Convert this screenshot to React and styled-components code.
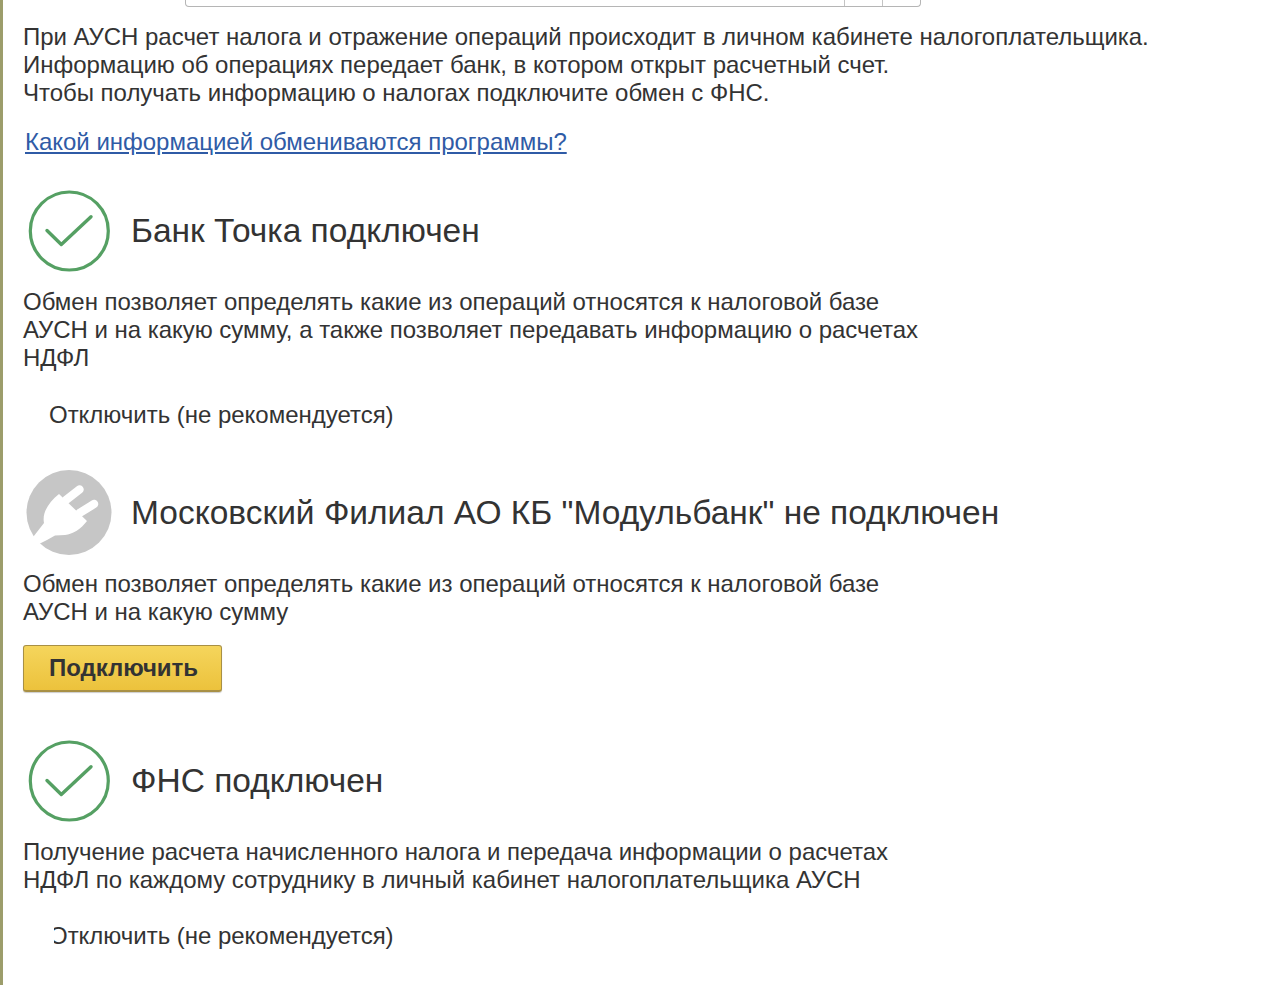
import React from "react";
import styled, { createGlobalStyle } from "styled-components";

const GlobalStyle = createGlobalStyle`
  html, body {
    margin: 0;
    padding: 0;
    background: #fff;
  }
  body {
    font-family: "Liberation Sans", Arial, sans-serif;
    color: #333;
  }
`;

const Page = styled.div`
  width: 1280px;
  height: 985px;
  box-sizing: border-box;
  border-left: 3px solid #9c9d6b;
  padding-left: 20px;
  overflow: hidden;
  display: flex;
  flex-direction: column;
`;

const SearchField = styled.div`
  display: flex;
  justify-content: flex-end;
  box-sizing: border-box;
  width: 736px;
  height: 7px;
  margin-left: 162px;
  border: 1px solid #b5b5b5;
  border-top: 0;
  border-radius: 0 0 4px 4px;
`;

const FieldButton = styled.div`
  width: 37px;
  border-left: 1px solid #c4c4c4;
`;

const Text = styled.p`
  margin: ${({ $top }) => $top || 0}px 0 0;
  font-size: 24px;
  line-height: 28px;
  letter-spacing: -0.02px;
  white-space: pre-line;
`;

const HelpLink = styled.a`
  display: block;
  margin: 21px 0 0 2px;
  font-size: 24px;
  line-height: 28px;
  letter-spacing: -0.02px;
  color: #2f5ba6;
  text-decoration: underline;
`;

const StatusRow = styled.div`
  display: flex;
  align-items: center;
  gap: 18px;
  margin-top: ${({ $top }) => $top}px;
  height: 88px;
`;

const StatusIcon = styled.svg`
  display: block;
  flex: none;
  width: 88px;
  height: 88px;
  margin-left: 2px;
`;

const StatusTitle = styled.h2`
  margin: 0;
  font-size: 33.5px;
  line-height: 40px;
  font-weight: 400;
  color: #333;
`;

const TextAction = styled.div`
  margin: ${({ $top }) => $top}px 0 0 26px;
  font-size: 24px;
  line-height: 28px;
  letter-spacing: -0.02px;
`;

// the first letter is cut by the left edge of the action, as in the product
const ClippedAction = styled(TextAction)`
  margin-left: 31px;
  overflow: hidden;
  white-space: nowrap;
  text-indent: -5px;
`;

const ConnectButton = styled.button`
  display: block;
  box-sizing: border-box;
  width: 199px;
  height: 47px;
  margin: 19px 0 0;
  padding: 0 0 0 2px;
  border: 1px solid #a89045;
  border-bottom-width: 2px;
  border-radius: 3px;
  background: linear-gradient(#f5d55c, #ecc23c);
  box-shadow: 0 1px 1px rgba(0, 0, 0, 0.2);
  font-family: inherit;
  font-size: 24px;
  font-weight: 700;
  color: #333;
`;

const CheckIcon = () => (
  <StatusIcon viewBox="0 0 88 88">
    <circle cx="44.3" cy="44" r="39" fill="none" stroke="#55a063" strokeWidth="3.2" />
    <path
      d="M22 43.5 L36.3 57.5 L66 29.7"
      fill="none"
      stroke="#55a063"
      strokeWidth="3.4"
      strokeLinecap="round"
      strokeLinejoin="round"
    />
  </StatusIcon>
);

const PlugIcon = () => (
  <StatusIcon viewBox="0 0 88 88">
    <circle cx="44" cy="43.5" r="42.5" fill="#c6c6c6" />
    <path
      d="M34 25 L62 52 C56 60 48 65 40 66 L30 66.5 L22 71 L8 78 L5 72 L19 54 C17 44 23 34 34 25 Z"
      fill="#fff"
    />
    <path
      d="M41 31 L54.5 20.5 M54.5 44 L69 35"
      stroke="#fff"
      strokeWidth="8.5"
      strokeLinecap="round"
    />
  </StatusIcon>
);

const App = () => (
  <Page>
    <GlobalStyle />
    <SearchField>
      <FieldButton />
      <FieldButton />
    </SearchField>
    <Text $top={16}>
      {"При АУСН расчет налога и отражение операций происходит в личном кабинете налогоплательщика.\nИнформацию об операциях передает банк, в котором открыт расчетный счет.\nЧтобы получать информацию о налогах подключите обмен с ФНС."}
    </Text>
    <HelpLink>Какой информацией обмениваются программы?</HelpLink>

    <StatusRow $top={31}>
      <CheckIcon />
      <StatusTitle>Банк Точка подключен</StatusTitle>
    </StatusRow>
    <Text $top={13}>
      {"Обмен позволяет определять какие из операций относятся к налоговой базе\nАУСН и на какую сумму, а также позволяет передавать информацию о расчетах\nНДФЛ"}
    </Text>
    <TextAction $top={29}>Отключить (не рекомендуется)</TextAction>

    <StatusRow $top={40}>
      <PlugIcon />
      <StatusTitle>Московский Филиал АО КБ "Модульбанк" не подключен</StatusTitle>
    </StatusRow>
    <Text $top={13}>
      {"Обмен позволяет определять какие из операций относятся к налоговой базе\nАУСН и на какую сумму"}
    </Text>
    <ConnectButton>Подключить</ConnectButton>

    <StatusRow $top={45}>
      <CheckIcon />
      <StatusTitle>ФНС подключен</StatusTitle>
    </StatusRow>
    <Text $top={13}>
      {"Получение расчета начисленного налога и передача информации о расчетах\nНДФЛ по каждому сотруднику в личный кабинет налогоплательщика АУСН"}
    </Text>
    <ClippedAction $top={28}>Отключить (не рекомендуется)</ClippedAction>
  </Page>
);

export default App;
